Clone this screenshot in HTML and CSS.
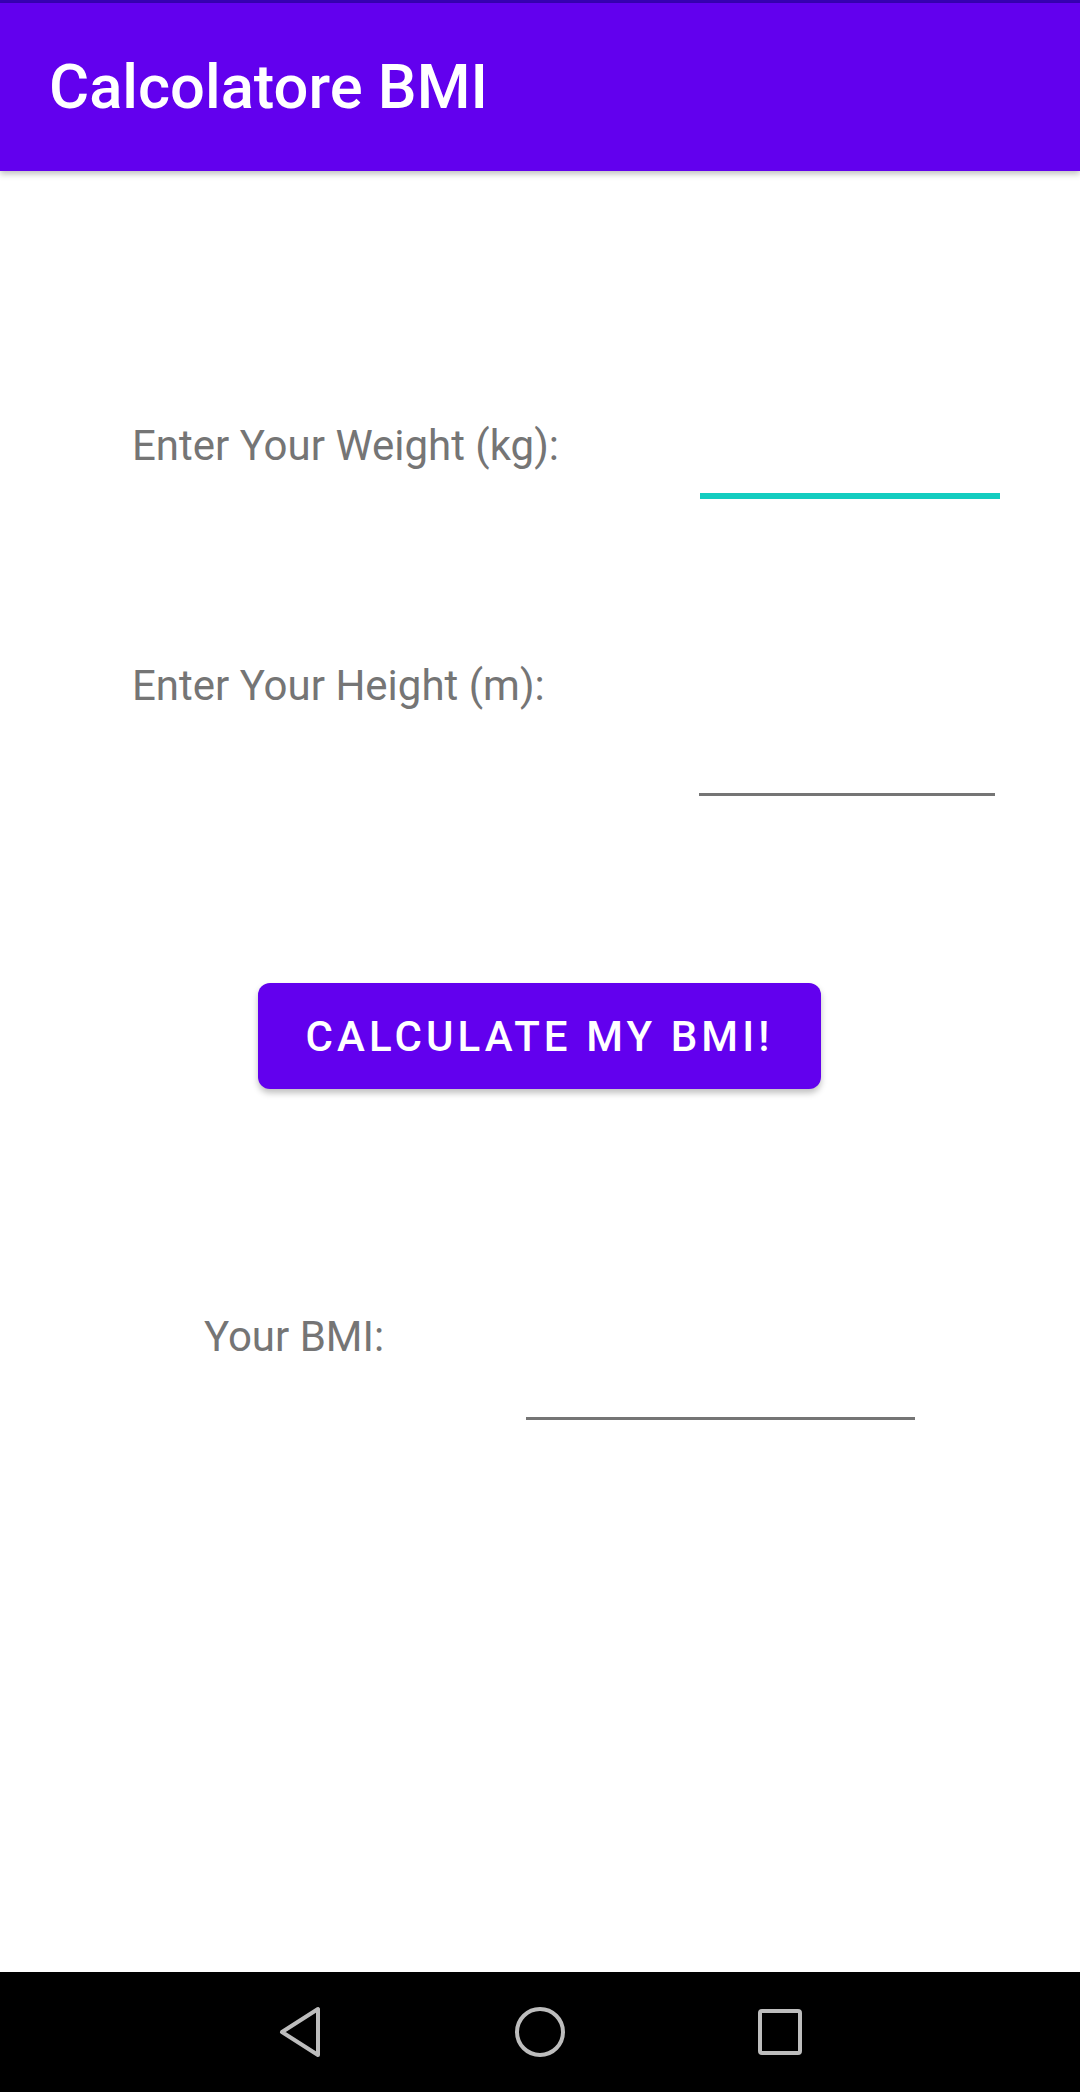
FILE: index.html
```html
<!DOCTYPE html>
<html lang="it">
<head>
<meta charset="utf-8">
<title>Calcolatore BMI</title>
<link rel="stylesheet" href="styles.css">
</head>
<body>
<div class="screen">
  <div class="statusline"></div>
  <header class="appbar"><h1 class="title">Calcolatore BMI</h1></header>
  <main class="content">
    <div class="row row-weight">
      <label class="label">Enter Your Weight (kg):</label>
      <div class="field field-focused"></div>
    </div>
    <div class="row row-height">
      <label class="label">Enter Your Height (m):</label>
      <div class="field field-height"></div>
    </div>
    <div class="btn-wrap">
      <button class="btn">Calculate my BMI!</button>
    </div>
    <div class="row row-result">
      <span class="label">Your BMI:</span>
      <div class="field field-result"></div>
    </div>
  </main>
  <nav class="navbar">
    <div class="nav-item">
      <svg width="60" height="60" viewBox="0 0 60 60"><path d="M48 7 L48 53 L12 30 Z" fill="none" stroke="#bdbdbd" stroke-width="4" stroke-linejoin="round"/></svg>
    </div>
    <div class="nav-item">
      <svg width="60" height="60" viewBox="0 0 60 60"><circle cx="30" cy="30" r="23" fill="none" stroke="#bdbdbd" stroke-width="4"/></svg>
    </div>
    <div class="nav-item">
      <svg width="60" height="60" viewBox="0 0 60 60"><rect x="10" y="9" width="40" height="42" rx="2" fill="none" stroke="#bdbdbd" stroke-width="4"/></svg>
    </div>
  </nav>
</div>
</body>
</html>
```
FILE: styles.css
```css
* { box-sizing: border-box; }
html, body { margin: 0; padding: 0; background: #ffffff; }
body { font-family: Roboto, "Noto Sans", sans-serif; }
.screen {
  width: 1080px;
  height: 2092px;
  display: flex;
  flex-direction: column;
  overflow: hidden;
}
.statusline { height: 3px; background: #3700b3; flex: none; }
.appbar {
  height: 168px;
  flex: none;
  background: #6200ee;
  display: flex;
  align-items: center;
  padding-left: 49px;
  box-shadow: 0 3px 6px rgba(0,0,0,0.25);
  position: relative;
  z-index: 1;
}
.title {
  margin: 0;
  color: #ffffff;
  font-size: 61.5px;
  font-weight: 500;
  line-height: 70px;
}
.content { flex: 1; display: flex; flex-direction: column; }
.row { display: flex; align-items: flex-start; }
.label {
  color: #757575;
  font-size: 42px;
  line-height: 49px;
}
.row-weight { margin-top: 250px; padding-left: 132px; }
.row-weight .field { margin-left: 141px; width: 300px; height: 78px; border-bottom: 6px solid #14cdc0; }
.row-height { margin-top: 162px; padding-left: 132px; }
.row-height .field { margin-left: 154px; width: 296px; height: 135px; border-bottom: 3px solid #757575; }
.btn-wrap { display: flex; justify-content: center; margin-top: 187px; padding-right: 1px; }
.btn {
  width: 563px;
  height: 106px;
  border: none;
  border-radius: 12px;
  background: #6200ee;
  color: #ffffff;
  font-family: Roboto, sans-serif;
  font-size: 42px;
  font-weight: 500;
  letter-spacing: 4.1px;
  text-transform: uppercase;
  box-shadow: 0 4px 6px rgba(0,0,0,0.25);
  padding: 0;
}
.row-result { margin-top: 223px; padding-left: 204px; }
.row-result .field { margin-left: 142px; width: 389px; height: 108px; border-bottom: 3px solid #757575; }
.navbar {
  height: 120px;
  flex: none;
  background: #000000;
  display: flex;
  justify-content: center;
  align-items: center;
}
.nav-item { width: 240px; display: flex; justify-content: center; align-items: center; }
.nav-item svg { display: block; }
```
